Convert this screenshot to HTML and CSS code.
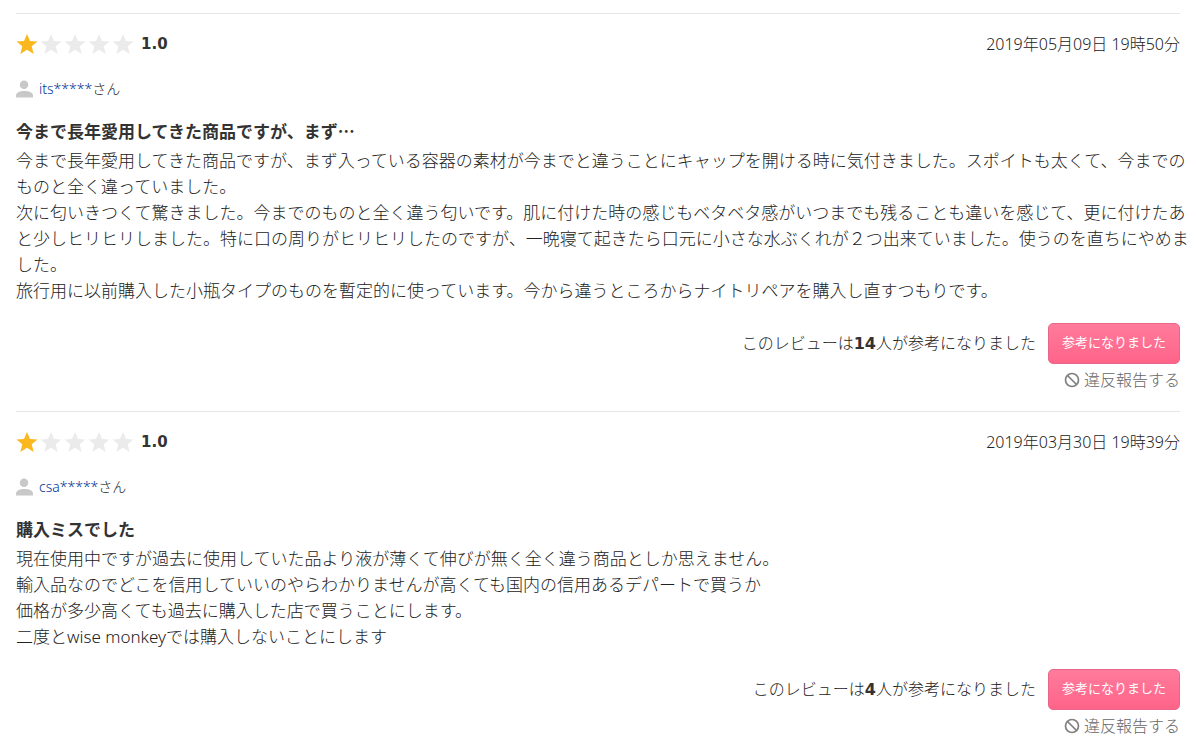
FILE: index.html
```html
<!DOCTYPE html>
<html lang="ja">
<head>
  <meta charset="UTF-8">
  <meta name="viewport" content="width=device-width, initial-scale=1.0">
  <title>商品レビュー</title>
  <link rel="stylesheet" href="styles.css">
</head>
<body>
  <!-- shared icons -->
  <svg class="sprite" width="0" height="0" aria-hidden="true">
    <symbol id="star" viewBox="0 0 22 22">
      <path d="M11 1l3 7 7.500.500-5.800 4.800 2 7.700L11 16.800 4.300 21l2-7.700L.500 8.500 8 8z"/>
    </symbol>
    <symbol id="user" viewBox="0 0 18 18">
      <circle cx="8.500" cy="4.500" r="4.500"/>
      <path d="M0 18v-2.200C0 12.500 4.500 11 9 11s9 1.500 9 4.800V18z"/>
    </symbol>
    <symbol id="ban" viewBox="0 0 16 16">
      <circle cx="8" cy="8" r="6.500" fill="none" stroke="currentColor" stroke-width="1.700"/>
      <path d="M3.500 3.500l9 9" fill="none" stroke="currentColor" stroke-width="1.700"/>
    </symbol>
  </svg>

  <main class="reviews">
    <article class="review">
      <header class="review-head">
        <div class="rating">
          <span class="stars">
            <svg class="star on"><use href="#star"/></svg>
            <svg class="star"><use href="#star"/></svg>
            <svg class="star"><use href="#star"/></svg>
            <svg class="star"><use href="#star"/></svg>
            <svg class="star"><use href="#star"/></svg>
          </span>
          <strong class="score">1.0</strong>
        </div>
        <time class="date" datetime="2019-05-09T19:50">2019年05月09日 19時50分</time>
      </header>
      <p class="author"><svg class="user-icon"><use href="#user"/></svg><span><a href="#">its*****</a>さん</span></p>
      <h2 class="title">今まで長年愛用してきた商品ですが、まず…</h2>
      <p class="comment">今まで長年愛用してきた商品ですが、まず入っている容器の素材が今までと違うことにキャップを開ける時に気付きました。スポイトも太くて、今までのものと全く違っていました。<br>
次に匂いきつくて驚きました。今までのものと全く違う匂いです。肌に付けた時の感じもベタベタ感がいつまでも残ることも違いを感じて、更に付けたあと少しヒリヒリしました。特に口の周りがヒリヒリしたのですが、一晩寝て起きたら口元に小さな水ぶくれが２つ出来ていました。使うのを直ちにやめました。<br>
旅行用に以前購入した小瓶タイプのものを暫定的に使っています。今から違うところからナイトリペアを購入し直すつもりです。</p>
      <footer class="review-foot">
        <div class="helpful">
          <span>このレビューは<strong>14</strong>人が参考になりました</span>
          <button type="button" class="vote">参考になりました</button>
        </div>
        <a href="#" class="report"><svg class="ban-icon"><use href="#ban"/></svg>違反報告する</a>
      </footer>
    </article>

    <article class="review">
      <header class="review-head">
        <div class="rating">
          <span class="stars">
            <svg class="star on"><use href="#star"/></svg>
            <svg class="star"><use href="#star"/></svg>
            <svg class="star"><use href="#star"/></svg>
            <svg class="star"><use href="#star"/></svg>
            <svg class="star"><use href="#star"/></svg>
          </span>
          <strong class="score">1.0</strong>
        </div>
        <time class="date" datetime="2019-03-30T19:39">2019年03月30日 19時39分</time>
      </header>
      <p class="author"><svg class="user-icon"><use href="#user"/></svg><span><a href="#">csa*****</a>さん</span></p>
      <h2 class="title">購入ミスでした</h2>
      <p class="comment">現在使用中ですが過去に使用していた品より液が薄くて伸びが無く全く違う商品としか思えません。<br>
輸入品なのでどこを信用していいのやらわかりませんが高くても国内の信用あるデパートで買うか<br>
価格が多少高くても過去に購入した店で買うことにします。<br>
二度とwise monkeyでは購入しないことにします</p>
      <footer class="review-foot">
        <div class="helpful">
          <span>このレビューは<strong>4</strong>人が参考になりました</span>
          <button type="button" class="vote">参考になりました</button>
        </div>
        <a href="#" class="report"><svg class="ban-icon"><use href="#ban"/></svg>違反報告する</a>
      </footer>
    </article>
  </main>
</body>
</html>
```
FILE: styles.css
```css
body {
  margin: 0;
  background: #fff;
  color: #222;
  font-family: "Noto Sans", "Noto Sans CJK JP", sans-serif;
  font-size: 16px;
  line-height: 26px;
  font-weight: 300;
}
p,
h2 {
  margin: 0;
}
.sprite {
  position: absolute;
}
.reviews {
  padding: 13px 17px 0 16px;
}
.review {
  border-top: 1px solid #e6e6e6;
  padding: 17px 0 18px;
}
.review-head {
  display: flex;
  justify-content: space-between;
  align-items: center;
}
.rating {
  display: flex;
  align-items: center;
  gap: 7px;
}
.stars {
  display: flex;
  gap: 2px;
}
.star {
  width: 22px;
  height: 22px;
  fill: #ebebeb;
}
.star.on {
  fill: #fab81e;
}
.score,
.helpful strong {
  font-family: "DejaVu Sans", sans-serif;
  font-weight: 700;
  color: #333;
}
.score {
  font-size: 15px;
}
.author {
  display: flex;
  align-items: center;
  gap: 6px;
  margin-top: 20px;
  font-size: 14px;
  line-height: 24px;
}
.user-icon {
  width: 17px;
  height: 18px;
  fill: #c8c8c8;
}
.author a {
  color: #003399;
  text-decoration: none;
}
.title {
  margin-top: 17px;
  font-family: "Noto Sans CJK JP", sans-serif;
  font-size: 17px;
  font-weight: 700;
  color: #333;
}
/* a full line holds 69 characters */
.comment {
  margin: 4px -12px 0 0;
  font-size: 17px;
}
.review-foot {
  display: flex;
  flex-direction: column;
  align-items: flex-end;
  margin-top: 19px;
}
.helpful {
  display: flex;
  align-items: center;
  gap: 12px;
}
.vote {
  height: 41px;
  padding: 0 13px 4px;
  border: 1px solid #e8668a;
  border-radius: 5px;
  background: linear-gradient(#ff7b9c, #ff6488);
  color: #fff;
  font-family: inherit;
  font-size: 13px;
  font-weight: 400;
  cursor: pointer;
}
.report {
  display: flex;
  align-items: center;
  gap: 4px;
  margin-top: 3px;
  color: #666;
  text-decoration: none;
}
.ban-icon {
  width: 16px;
  height: 16px;
  color: #808080;
}
```
